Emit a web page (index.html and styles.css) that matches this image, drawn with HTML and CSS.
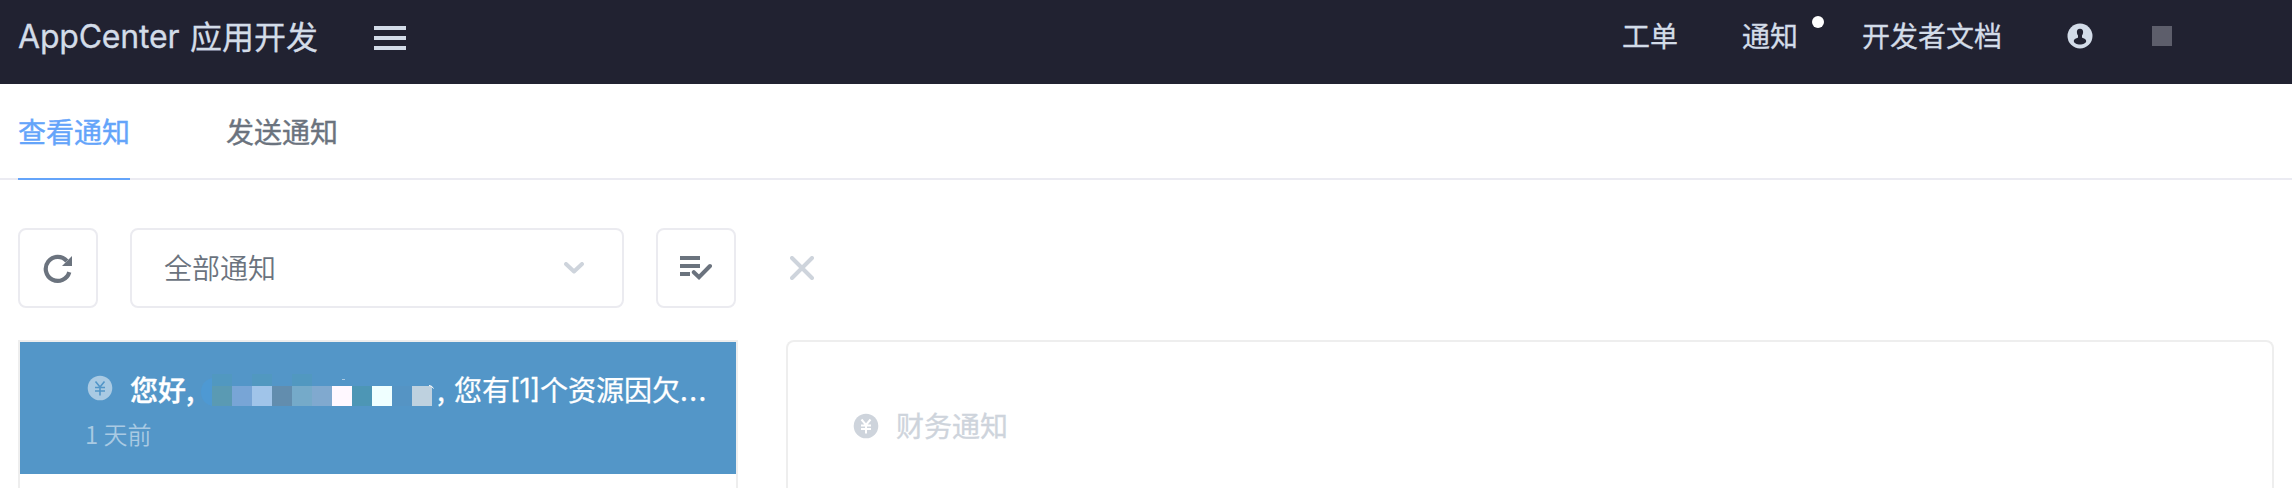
FILE: index.html
```html
<!DOCTYPE html>
<html lang="zh-CN">
<head>
<meta charset="utf-8">
<title>AppCenter 应用开发</title>
<link rel="stylesheet" href="styles.css">
</head>
<body>
<header class="topbar">
  <div class="brand"><span class="brand-en">AppCenter</span><span class="brand-cn">应用开发</span></div>
  <svg class="menu" width="32" height="24" viewBox="0 0 32 24"><path d="M0 0h32v4H0zM0 10h32v4H0zM0 20h32v4H0z" fill="currentColor"/></svg>
  <nav class="nav">
    <a>工单</a>
    <a class="notice">通知<i class="dot"></i></a>
    <a>开发者文档</a>
    <svg class="user" width="26" height="26" viewBox="0 0 26 26"><circle cx="13" cy="13" r="12.500" fill="currentColor"/><path d="M13 5.700c2.300 0 3.300 1.500 3.100 3.600-.1 1.500-.5 2.500-1.100 3.200v1.700c.2 1.100 4.200 1.300 4.200 3.800 0 2.300-3 3.500-6.200 3.500s-6.200-1.200-6.200-3.500c0-2.500 4-2.700 4.200-3.800v-1.700c-.6-.7-1-1.700-1.100-3.200C9.700 7.200 10.700 5.700 13 5.700z" fill="#212231"/></svg>
    <span class="avatar"></span>
  </nav>
</header>
<div class="tabs">
  <a class="tab active">查看通知</a>
  <a class="tab">发送通知</a>
</div>
<div class="toolbar">
  <button class="btn"><svg width="32" height="32" viewBox="0 0 32 32"><path d="M27.300 20.200A12 12 0 1 1 24.800 9" fill="none" stroke="currentColor" stroke-width="4.200"/><path d="M30 4v10H20z" fill="currentColor"/></svg></button>
  <div class="select"><span>全部通知</span><svg width="20" height="12" viewBox="0 0 20 12"><path d="M2 2l8 7.500L18 2" fill="none" stroke="currentColor" stroke-width="4" stroke-linecap="round" stroke-linejoin="round"/></svg></div>
  <button class="btn"><svg width="32" height="24" viewBox="0 0 32 24"><path d="M0 0h20v4H0zM0 8h20v4H0zM0 16h10v4H0z" fill="currentColor"/><path d="M13.800 16.200l5.200 5L30 10" fill="none" stroke="currentColor" stroke-width="4" stroke-linecap="round"/></svg></button>
  <svg class="close" width="24" height="24" viewBox="0 0 24 24"><path d="M2 2l20 20M22 2L2 22" stroke="currentColor" stroke-width="4" stroke-linecap="round"/></svg>
</div>
<main class="content">
  <section class="list">
    <article class="item">
      <div class="item-title">
        <svg class="yen" width="26" height="26" viewBox="0 0 26 26"><circle cx="13" cy="13" r="12.300" fill="#a9cae3"/><path d="M8.500 6.500L13 12l4.500-5.500M8 12.500h10M8 16h10M13 12v8.500" fill="none" stroke="#5396c8" stroke-width="1.600"/></svg>
        <span class="hello">您好,</span>
        <svg class="mosaic" width="236" height="36" viewBox="0 0 236 36"><path d="M11 4v28C3 30 0 24 0 18S3 6 11 4z" fill="#4e99d3"/><path d="M11 0h20v12H11zM51 0h20v12H51zM91 0h20v12H91z" fill="#5198c0"/><path d="M11 12h20v20H11z" fill="#5a9ab3"/><path d="M31 12h20v20H31z" fill="#78a5d6"/><path d="M51 12h20v20H51z" fill="#a0c4e9"/><path d="M71 12h20v20H71z" fill="#628dae"/><path d="M91 12h20v20H91z" fill="#75aac9"/><path d="M111 12h20v20h-20z" fill="#80a9cf"/><path d="M131 12h20v20h-20z" fill="#fff8ff"/><path d="M151 12h20v20h-20z" fill="#4d96b5"/><path d="M171 12h20v20h-20z" fill="#efffff"/><path d="M191 12h20v20h-20z" fill="#5594c4"/><path d="M211 12h20v20h-20z" fill="#bed1df"/><path d="M141 5.500h3" stroke="#a9cae3"/><path d="M228 11.500q3 0 4.500 3" fill="none" stroke="#fff"/></svg>
        <span class="summary"><b class="comma">,</b>您有<b class="idx">[1]</b>个资源因欠<b class="more">...</b></span>
      </div>
      <div class="time"><span>1</span> 天前</div>
    </article>
  </section>
  <section class="detail">
    <svg class="yen" width="26" height="26" viewBox="0 0 26 26"><circle cx="13" cy="13" r="12.300" fill="#ced4dc"/><path d="M8.500 6.500L13 12l4.500-5.500M8 12.500h10M8 16h10M13 12v8.500" fill="none" stroke="#fff" stroke-width="2"/></svg>
    <span>财务通知</span>
  </section>
</main>
</body>
</html>
```
FILE: styles.css
```css
* { box-sizing: border-box; }
body {
  margin: 0;
  height: 488px;
  overflow: hidden;
  background: #fff;
  color: #6b737e;
  font: 28px/40px "Noto Sans CJK SC", sans-serif;
}
svg { display: block; flex: none; }
.topbar {
  display: flex;
  height: 84px;
  padding-left: 18px;
  background: #212231;
  color: #d3dce8;
}
.brand {
  display: flex;
  width: 356px;
  gap: 11px;
  font-size: 32px;
  -webkit-text-stroke: 0.3px;
}
.brand-en { width: 161px; padding-top: 17px; font-family: Inter, sans-serif; letter-spacing: -0.2px; }
.brand-cn { padding-top: 15px; }
.menu { margin-top: 26px; }
.nav { display: flex; gap: 64px; margin-left: auto; padding: 15px 120px 0 0; -webkit-text-stroke: 0.3px; }
.nav a { white-space: nowrap; }
.notice { position: relative; }
.dot { position: absolute; left: 70px; top: 1px; width: 12px; height: 12px; border-radius: 50%; background: #fff; }
.user { margin: 8px -5px 0 1px; }
.avatar { width: 20px; height: 20px; margin-top: 11px; background: #5d5e6b; }
.tabs { display: flex; gap: 96px; height: 96px; padding-left: 18px; border-bottom: 2px solid #ebebf2; }
.tab { height: 96px; padding-top: 27px; -webkit-text-stroke: 0.4px; }
.active { color: #64a4fa; border-bottom: 2px solid #64a4fa; }
.toolbar { display: flex; gap: 32px; align-items: center; padding: 48px 18px 0; }
.btn, .select { height: 80px; border: 2px solid #ebebf0; border-radius: 8px; background: #fff; }
.btn { display: flex; align-items: center; justify-content: center; width: 80px; padding: 0; color: #6b737e; }
.select { display: flex; align-items: center; justify-content: space-between; width: 494px; padding: 0 38px 0 32px; font-weight: 350; }
.select span { margin-top: -2px; }
.select svg { color: #ced4dc; }
.close { margin-left: 22px; color: #ced4dc; }
.content { display: flex; gap: 48px; padding: 32px 18px 0; }
.list, .detail { height: 148px; border: 2px solid #eee; border-bottom: 0; }
.list { width: 720px; }
.item { height: 132px; padding: 26px 0 0 66px; background: #5396c8; color: #fff; }
.item-title { display: flex; height: 44px; white-space: nowrap; -webkit-text-stroke: 0.3px; }
.item-title .yen { margin: 7px 17px 0 1px; }
.hello { width: 71px; line-height: 42px; font-weight: 500; }
.mosaic { margin-top: 6px; }
.summary { display: flex; line-height: 42px; }
.summary b { font-weight: 400; }
.comma { width: 17px; }
.summary .idx { width: 30px; font-family: Inter, sans-serif; font-size: 27px; letter-spacing: -0.3px; }
.more { letter-spacing: 1.500px; }
.time { margin-top: 2px; margin-left: -1px; color: #a9cae3; font-size: 24px; line-height: 40px; font-weight: 350; }
.detail { display: flex; flex: 1; gap: 17px; padding: 63px 0 0 65px; border-radius: 8px 8px 0 0; color: #ced4dc; -webkit-text-stroke: 0.3px; }
.detail .yen { margin-top: 8px; }
```
